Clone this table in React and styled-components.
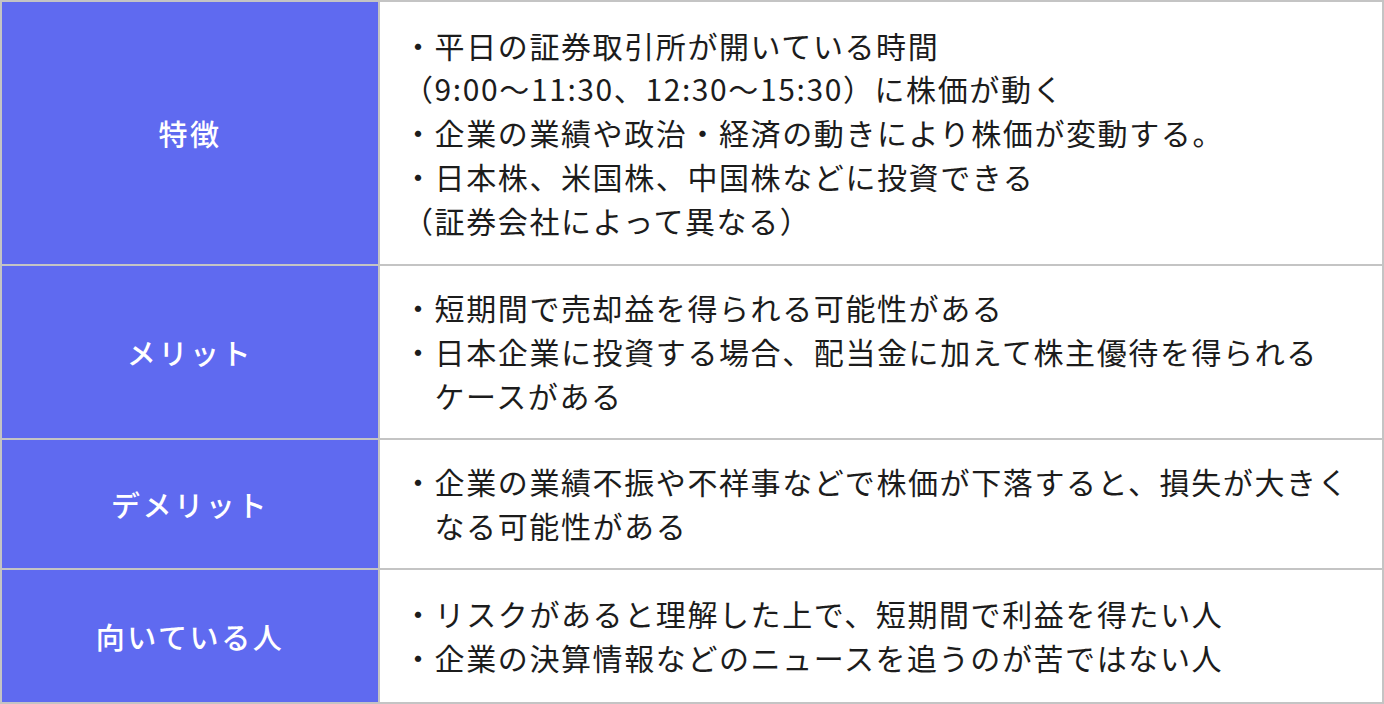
import { createGlobalStyle, styled } from "styled-components";

const GlobalStyle = createGlobalStyle`
  html, body {
    margin: 0;
    padding: 0;
    background: #ffffff;
  }
  body {
    font-family: "Noto Sans CJK JP", "Noto Sans", sans-serif;
    color: #1c1c1c;
  }
`;

const Table = styled.div`
  display: grid;
  grid-template-columns: 376px 1fr;
  grid-template-rows: 262px 172px 128px 132px;
  gap: 2px;
  padding: 2px;
  width: 1384px;
  box-sizing: border-box;
  background-color: #c4c4c4;
`;

const HeadCell = styled.div`
  display: flex;
  align-items: center;
  justify-content: center;
  background-color: #5f6af0;
  color: #ffffff;
  font-size: 29px;
  letter-spacing: 2.6px;
  font-weight: 500;
`;

const BodyCell = styled.div`
  display: flex;
  flex-direction: column;
  justify-content: center;
  background-color: #ffffff;
  padding: 0 22px 0 23px;
  font-size: 30px;
  line-height: 43.75px;
  letter-spacing: 1.6px;
`;

const Line = styled.p`
  margin: 0;
  white-space: nowrap;
  ${(props) => (props.$hang ? "padding-left: 1.05em; text-indent: -1.05em;" : "")}
`;

const rows = [
  {
    head: "特徴",
    lines: [
      ["・平日の証券取引所が開いている時間", false],
      ["（9:00～11:30、12:30～15:30）に株価が動く", false],
      ["・企業の業績や政治・経済の動きにより株価が変動する。", false],
      ["・日本株、米国株、中国株などに投資できる", false],
      ["（証券会社によって異なる）", false],
    ],
  },
  {
    head: "メリット",
    lines: [
      ["・短期間で売却益を得られる可能性がある", true],
      ["・日本企業に投資する場合、配当金に加えて株主優待を得られる\nケースがある", true],
    ],
  },
  {
    head: "デメリット",
    lines: [
      ["・企業の業績不振や不祥事などで株価が下落すると、損失が大きく\nなる可能性がある", true],
    ],
  },
  {
    head: "向いている人",
    lines: [
      ["・リスクがあると理解した上で、短期間で利益を得たい人", true],
      ["・企業の決算情報などのニュースを追うのが苦ではない人", true],
    ],
  },
];

function TextLine({ text, hang }) {
  const parts = text.split("\n");
  return (
    <Line $hang={hang}>
      {parts.map((part, i) => (
        <span key={i}>
          {i > 0 && <br />}
          {part}
        </span>
      ))}
    </Line>
  );
}

function Row({ row }) {
  return (
    <>
      <HeadCell>{row.head}</HeadCell>
      <BodyCell>
        {row.lines.map(([text, hang], i) => (
          <TextLine key={i} text={text} hang={hang} />
        ))}
      </BodyCell>
    </>
  );
}

export default function App() {
  return (
    <>
      <GlobalStyle />
      <Table>
        {rows.map((row) => (
          <Row key={row.head} row={row} />
        ))}
      </Table>
    </>
  );
}
